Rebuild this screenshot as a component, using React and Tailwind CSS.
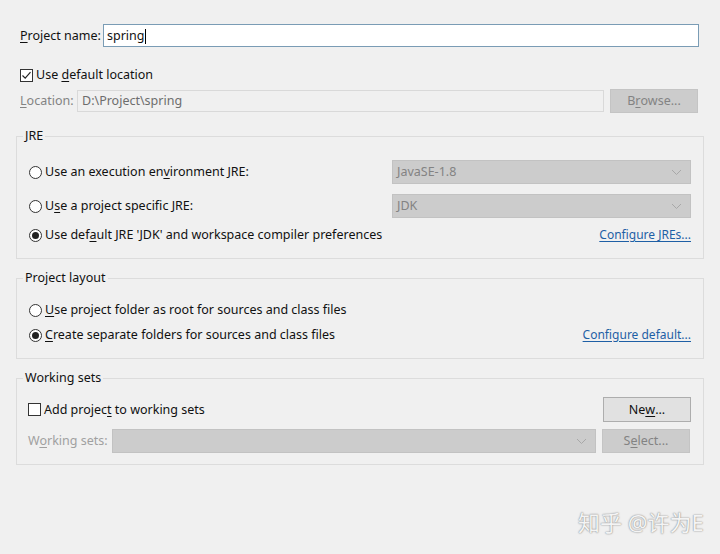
import React from "react";

const U = ({ children }) => <span className="underline underline-offset-2">{children}</span>;

function Check({ checked }) {
  return (
    <svg width="13" height="13" viewBox="0 0 13 13" className="shrink-0">
      <rect x="0.5" y="0.5" width="12" height="12" fill="#fff" stroke="#333" />
      {checked && <path d="M2.5 6.5 L5.2 9.2 L10.5 3.2" fill="none" stroke="#222" strokeWidth="1.2" />}
    </svg>
  );
}

function Radio({ checked }) {
  return (
    <svg width="13" height="13" viewBox="0 0 13 13" className="shrink-0">
      <circle cx="6.5" cy="6.5" r="6" fill="#fff" stroke="#333" />
      {checked && <circle cx="6.5" cy="6.5" r="3.5" fill="#222" />}
    </svg>
  );
}

function Chevron() {
  return (
    <svg width="11" height="7" viewBox="0 0 11 7" className="shrink-0">
      <path d="M1 1 L5.5 5.5 L10 1" fill="none" stroke="#a8a8a8" strokeWidth="1" />
    </svg>
  );
}

function Combo({ text, className }) {
  return (
    <div className={"flex items-center justify-between bg-[#cccccc] border border-[#c2c2c2] pl-[4px] pr-[8px] text-[#838383] " + className}>
      <span>{text}</span>
      <Chevron />
    </div>
  );
}

function Group({ title, children, className }) {
  return (
    <fieldset className={"border border-[#dcdcdc] " + (className || "")}>
      <legend className="ml-[6px] px-[2px] leading-[16px] text-[#111]">{title}</legend>
      {children}
    </fieldset>
  );
}

export default function App() {
  return (
    <div
      className="relative w-[720px] h-[554px] bg-[#f0f0f0] px-4 pt-[24px] text-[12.5px] leading-[16px] text-[#111] overflow-hidden"
      style={{ fontFamily: '"Noto Sans", "Noto Sans CJK SC", sans-serif' }}
    >
      {/* Project name */}
      <div className="flex items-center h-[23px] pl-[4px] pr-[5px]">
        <div className="w-[83px] shrink-0 pt-[1px]">
          <U>P</U>roject name:
        </div>
        <div className="flex-1 h-[23px] bg-white border border-[#7a9cb5] flex items-center pl-[3px] pt-[1px]">
          spring<span className="inline-block w-[1px] h-[15px] bg-black ml-[1px]" />
        </div>
      </div>

      {/* Use default location */}
      <div className="flex items-center gap-[3px] h-[22px] mt-[17px] pl-[4px]">
        <Check checked />
        <span>
          Use <U>d</U>efault location
        </span>
      </div>

      {/* Location */}
      <div className="flex items-center h-[24px] mt-[3px] pl-[4px] pr-[6px]">
        <div className="w-[57px] shrink-0 text-[#838383]">
          <U>L</U>ocation:
        </div>
        <div className="w-[527px] h-[22px] border border-[#d9d9d9] flex items-center pl-[4px] text-[#6d6d6d]">
          D:\Project\spring
        </div>
        <div className="ml-[6px] flex-1 h-[24px] bg-[#cccccc] border border-[#c4c4c4] flex items-center justify-center text-[#838383]">
          B<U>r</U>owse...
        </div>
      </div>

      {/* JRE */}
      <Group title="JRE" className="mt-[15px]">
        <div className="pl-[12px] pr-[12px] pt-[16px] pb-[11px]">
          <div className="flex items-center h-[24px]">
            <div className="flex items-center gap-[3px] flex-1">
              <Radio />
              <span>
                Use an execution en<U>v</U>ironment JRE:
              </span>
            </div>
            <Combo text="JavaSE-1.8" className="w-[299px] h-[24px]" />
          </div>
          <div className="flex items-center h-[24px] mt-[10px]">
            <div className="flex items-center gap-[3px] flex-1">
              <Radio />
              <span>
                U<U>s</U>e a project specific JRE:
              </span>
            </div>
            <Combo text="JDK" className="w-[299px] h-[24px]" />
          </div>
          <div className="flex items-center h-[24px] mt-[5px]">
            <div className="flex items-center gap-[3px] flex-1">
              <Radio checked />
              <span>
                Use def<U>a</U>ult JRE 'JDK' and workspace compiler preferences
              </span>
            </div>
            <span className="text-[12px] text-[#1e5fa5] underline underline-offset-2">Configure JREs...</span>
          </div>
        </div>
      </Group>

      {/* Project layout */}
      <Group title="Project layout" className="mt-[11px]">
        <div className="pl-[12px] pr-[12px] pt-[14px] pb-[13px]">
          <div className="flex items-center h-[20px]">
            <div className="flex items-center gap-[3px] flex-1">
              <Radio />
              <span>
                <U>U</U>se project folder as root for sources and class files
              </span>
            </div>
          </div>
          <div className="flex items-center h-[20px] mt-[5px]">
            <div className="flex items-center gap-[3px] flex-1">
              <Radio checked />
              <span>
                <U>C</U>reate separate folders for sources and class files
              </span>
            </div>
            <span className="text-[12px] text-[#1e5fa5] underline underline-offset-2">Configure default...</span>
          </div>
        </div>
      </Group>

      {/* Working sets */}
      <Group title="Working sets" className="mt-[11px]">
        <div className="pl-[11px] pr-[12px] pt-[11px] pb-[11px]">
          <div className="flex items-center h-[25px]">
            <div className="flex items-center gap-[3px] flex-1">
              <Check />
              <span>
                Add projec<U>t</U> to working sets
              </span>
            </div>
            <div className="w-[88px] h-[25px] bg-[#e1e1e1] border border-[#adadad] flex items-center justify-center text-[#111]">
              Ne<U>w</U>...
            </div>
          </div>
          <div className="flex items-center h-[24px] mt-[7px]">
            <div className="w-[84px] shrink-0 text-[#a0a0a0]">
              W<U>o</U>rking sets:
            </div>
            <Combo text="" className="w-[484px] h-[24px]" />
            <div className="ml-[6px] w-[88px] h-[24px] bg-[#cccccc] border border-[#c4c4c4] flex items-center justify-center text-[#838383]">
              S<U>e</U>lect...
            </div>
          </div>
        </div>
      </Group>

      {/* Watermark */}
      <div
        className="absolute left-[578px] top-[508px] text-[22px] leading-[28px] text-[#f4f4f4]"
        style={{ textShadow: "0 0 1px #8a8a8a, 0 0 2px #a0a0a0" }}
      >
        知乎 @许为E
      </div>
    </div>
  );
}
